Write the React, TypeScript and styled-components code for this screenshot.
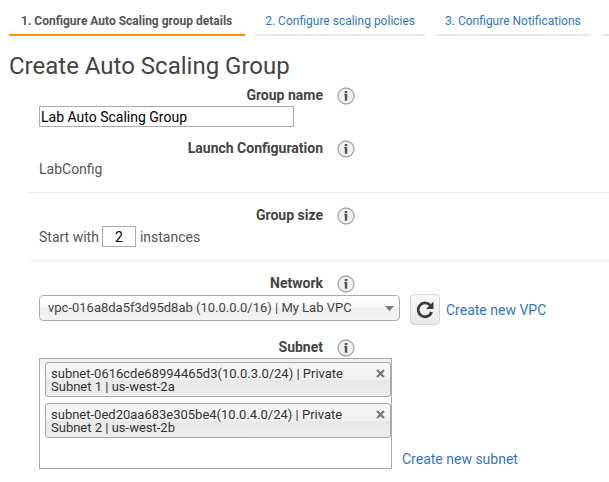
import React from "react";
import styled, { createGlobalStyle } from "styled-components";

const GlobalStyle = createGlobalStyle`
  *, *::before, *::after { box-sizing: border-box; }
  body {
    margin: 0;
    background: #fff;
    color: #555;
    font-family: Roboto, "Liberation Sans", sans-serif;
    font-size: 14px;
    line-height: 20px;
  }
  input, select, button { font: inherit; }
`;

const Page = styled.div`
  overflow: hidden;
`;

const Steps = styled.ol`
  display: flex;
  gap: 10px;
  margin: 0;
  padding: 10px 0 0 9px;
  list-style: none;
  overflow: hidden;
`;

const Step = styled.li<{ $current?: boolean }>`
  flex: none;
  height: 26px;
  min-width: 20px;
  padding: 0 ${(p) => (p.$current ? "13px" : "10px")} 0 ${(p) => (p.$current ? "12px" : "10px")};
  border-bottom: 2px solid ${(p) => (p.$current ? "#ff9100" : "#e8e8e8")};
  font-size: 12px;
  line-height: 22px;
  font-weight: ${(p) => (p.$current ? 700 : 400)};
  white-space: nowrap;
`;

const Link = styled.a`
  color: #3576be;
  text-decoration: none;
  white-space: nowrap;
`;

const Title = styled.h1`
  margin: 14px 0 3px 9px;
  font-size: 24px;
  line-height: 32px;
  font-weight: 400;
  color: #444;
`;

const Form = styled.form`
  margin-left: 29px;
`;

const Section = styled.section`
  padding: 12px 0 13px 10px;
  border-bottom: 1px solid #eee;

  &:first-child { padding-top: 0; }
  &:last-child { border-bottom: 0; }
`;

const Heading = styled.div`
  display: flex;
  align-items: flex-start;
  justify-content: flex-end;
  gap: 14px;
  width: 316px;
  height: 21px;
  color: #444;
  font-weight: 700;
`;

const InfoButton = styled.button`
  display: flex;
  margin-top: 2px;
  padding: 0;
  border: 0;
  background: none;
`;

const Field = styled.div<{ $end?: boolean }>`
  display: flex;
  align-items: ${(p) => (p.$end ? "flex-end" : "center")};
`;

const TextInput = styled.input`
  width: 255px;
  height: 21px;
  padding: 0 1px;
  border: 1px solid #aaa;
  background: #fff;
  color: #000;
`;

const NameField = styled(Field)`
  margin-bottom: 11px;
`;

const SizeInput = styled(TextInput)`
  width: 34px;
  margin: 0 4px 0 3px;
  text-align: center;
`;

const NetworkField = styled(Field)`
  margin-bottom: 12px;
`;

const SelectBox = styled.div`
  position: relative;
  width: 361px;
  margin-bottom: 4px;

  svg {
    position: absolute;
    right: 6px;
    top: 11px;
    pointer-events: none;
  }
`;

const Select = styled.select`
  display: block;
  width: 100%;
  height: 26px;
  padding: 0 24px 0 8px;
  border: 1px solid #aaa;
  border-radius: 4px;
  background: linear-gradient(#fff 20%, #f6f6f6 50%, #eee 52%, #f4f4f4 100%);
  color: #444;
  font-size: 13px;
  appearance: none;
`;

const RefreshButton = styled.button`
  display: flex;
  align-items: center;
  justify-content: center;
  width: 30px;
  height: 31px;
  margin: 0 6px 0 10px;
  padding: 0;
  border: 1px solid #d4d4d4;
  border-radius: 4px;
  background: linear-gradient(#f8f8f8, #e9e9e9);
`;

const SubnetBox = styled.ul`
  width: 353px;
  min-height: 111px;
  margin: 0 10px 0 0;
  padding: 3px 0 0 5px;
  border: 1px solid #aaa;
  background: linear-gradient(#eee 0, #fff 14px);
  list-style: none;
`;

const Chip = styled.li`
  display: flex;
  justify-content: space-between;
  align-items: flex-start;
  height: 35px;
  margin-bottom: 6px;
  padding: 4px 5px 3px 5px;
  border: 1px solid #aaa;
  border-radius: 3px;
  background: linear-gradient(#f4f4f4 20%, #f0f0f0 50%, #e8e8e8 52%, #eee);
  color: #333;
  font-size: 13px;
  line-height: 13px;
`;

const ChipLabel = styled.span`
  width: 310px;
`;

const RemoveButton = styled.button`
  display: flex;
  margin-top: 2px;
  padding: 0;
  border: 0;
  background: none;
`;

function Info({ about }: { about: string }) {
  return (
    <InfoButton type="button" aria-label={`About ${about}`}>
      <svg width="18" height="18" viewBox="0 0 18 18">
        <circle cx="9" cy="9" r="8" fill="#f1f1f1" stroke="#a6a6a6" strokeWidth="1.3" />
        <path d="M7.700 4h2.600v2.200H7.700zM7.200 7H10.300v6.800H7.800V8.300H7.200z" fill="#555" />
      </svg>
    </InfoButton>
  );
}

const subnets = [
  "subnet-0616cde68994465d3(10.0.3.0/24) | Private Subnet 1 | us-west-2a",
  "subnet-0ed20aa683e305be4(10.0.4.0/24) | Private Subnet 2 | us-west-2b",
];

export default function App() {
  return (
    <Page>
      <GlobalStyle />
      <Steps>
        <Step $current aria-current="step">1. Configure Auto Scaling group details</Step>
        <Step><Link href="#policies">2. Configure scaling policies</Link></Step>
        <Step><Link href="#notifications">3. Configure Notifications</Link></Step>
        <Step />
      </Steps>
      <Title>Create Auto Scaling Group</Title>
      <Form>
        <Section>
          <Heading><label htmlFor="name">Group name</label><Info about="group name" /></Heading>
          <NameField><TextInput id="name" defaultValue="Lab Auto Scaling Group" /></NameField>
          <Heading><span>Launch Configuration</span><Info about="launch configuration" /></Heading>
          <Field>LabConfig</Field>
        </Section>
        <Section>
          <Heading><label htmlFor="size">Group size</label><Info about="group size" /></Heading>
          <Field>
            Start with
            <SizeInput id="size" defaultValue="2" />
            instances
          </Field>
        </Section>
        <Section>
          <Heading><label htmlFor="network">Network</label><Info about="network" /></Heading>
          <NetworkField>
            <SelectBox>
              <Select id="network">
                <option>vpc-016a8da5f3d95d8ab (10.0.0.0/16) | My Lab VPC</option>
              </Select>
              <svg width="9" height="5" viewBox="0 0 9 5"><path d="M0 0h9L4.500 5z" fill="#777" /></svg>
            </SelectBox>
            <RefreshButton type="button" aria-label="Refresh networks">
              <svg width="20" height="20" viewBox="0 0 20 20">
                <path d="M15.200 5.200A6.900 6.900 0 1 0 16.600 12" fill="none" stroke="#3c3c3c" strokeWidth="2.800" />
                <path d="M18.500 1.500V9H11z" fill="#3c3c3c" />
              </svg>
            </RefreshButton>
            <Link href="#new-vpc">Create new VPC</Link>
          </NetworkField>
          <Heading><span id="subnet">Subnet</span><Info about="subnet" /></Heading>
          <Field $end>
            <SubnetBox aria-labelledby="subnet">
              {subnets.map((subnet) => (
                <Chip key={subnet}>
                  <ChipLabel>{subnet}</ChipLabel>
                  <RemoveButton type="button" aria-label={`Remove ${subnet}`}>
                    <svg width="9" height="9" viewBox="0 0 9 9">
                      <path d="M1 1l7 7M8 1L1 8" stroke="#777" strokeWidth="2.200" />
                    </svg>
                  </RemoveButton>
                </Chip>
              ))}
            </SubnetBox>
            <Link href="#new-subnet">Create new subnet</Link>
          </Field>
        </Section>
      </Form>
    </Page>
  );
}
